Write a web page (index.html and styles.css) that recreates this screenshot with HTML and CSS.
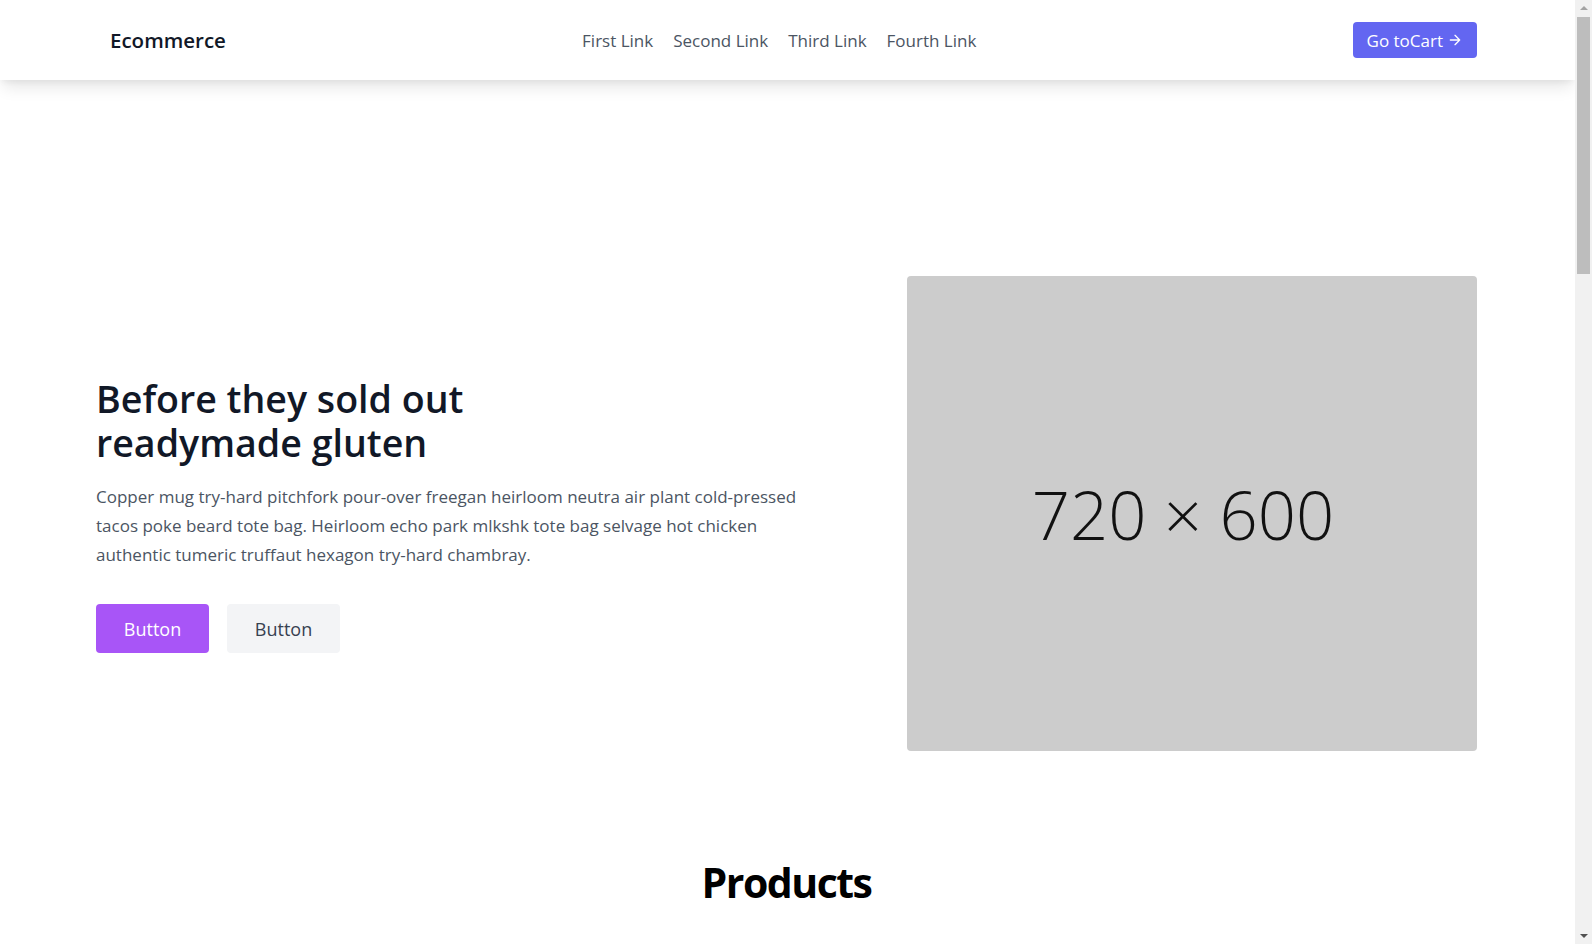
FILE: index.html
```html
<!DOCTYPE html>
<html lang="en">
<head>
<meta charset="utf-8">
<title>Ecommerce</title>
<link rel="stylesheet" href="styles.css">
</head>
<body>
<header class="site-header">
  <div class="header-inner">
    <a class="logo" href="#">Ecommerce</a>
    <nav class="main-nav">
      <a href="#">First Link</a>
      <a href="#">Second Link</a>
      <a href="#">Third Link</a>
      <a href="#">Fourth Link</a>
    </nav>
    <button class="cart-btn" type="button">Go toCart
      <svg class="cart-arrow" viewBox="0 0 24 24" fill="none" stroke="currentColor" stroke-width="2" stroke-linecap="round" stroke-linejoin="round"><path d="M5 12h14M12 5l7 7-7 7"/></svg>
    </button>
  </div>
</header>

<section class="hero">
  <div class="hero-inner">
    <div class="hero-text">
      <h1 class="hero-title">Before they sold out<br>readymade gluten</h1>
      <p class="hero-copy">Copper mug try-hard pitchfork pour-over freegan heirloom neutra air plant cold-pressed tacos poke beard tote bag. Heirloom echo park mlkshk tote bag selvage hot chicken authentic tumeric truffaut hexagon try-hard chambray.</p>
      <div class="hero-actions">
        <button class="btn btn-primary" type="button">Button</button>
        <button class="btn btn-secondary" type="button">Button</button>
      </div>
    </div>
    <div class="hero-image"><span>720 × 600</span></div>
  </div>
</section>

<section class="products">
  <h2 class="products-title">Products</h2>
  <div class="product-grid">
    <div class="product-card"><div class="product-img"><span>420 × 260</span></div><h3>CATEGORY</h3><h2>The Catalyzer</h2><p>$16.00</p></div>
    <div class="product-card"><div class="product-img"><span>420 × 260</span></div><h3>CATEGORY</h3><h2>Shooting Stars</h2><p>$21.15</p></div>
    <div class="product-card"><div class="product-img"><span>420 × 260</span></div><h3>CATEGORY</h3><h2>Neptune</h2><p>$12.00</p></div>
    <div class="product-card"><div class="product-img"><span>420 × 260</span></div><h3>CATEGORY</h3><h2>The 400 Blows</h2><p>$18.40</p></div>
    <div class="product-card"><div class="product-img"><span>420 × 260</span></div><h3>CATEGORY</h3><h2>The Catalyzer</h2><p>$16.00</p></div>
    <div class="product-card"><div class="product-img"><span>420 × 260</span></div><h3>CATEGORY</h3><h2>Shooting Stars</h2><p>$21.15</p></div>
    <div class="product-card"><div class="product-img"><span>420 × 260</span></div><h3>CATEGORY</h3><h2>Neptune</h2><p>$12.00</p></div>
    <div class="product-card"><div class="product-img"><span>420 × 260</span></div><h3>CATEGORY</h3><h2>The 400 Blows</h2><p>$18.40</p></div>
  </div>
</section>

<div class="fake-scrollbar" aria-hidden="true">
  <span class="sb-arrow sb-up"></span>
  <span class="sb-thumb"></span>
  <span class="sb-arrow sb-down"></span>
</div>
</body>
</html>
```

FILE: styles.css
```css
* { box-sizing: border-box; }

html, body {
  margin: 0;
  padding: 0;
}

body {
  padding-right: 17px;
  font-family: "Open Sans", "Noto Sans", "Liberation Sans", sans-serif;
  color: #111827;
  background: #ffffff;
}

a { text-decoration: none; color: inherit; }

button { font-family: inherit; cursor: pointer; }

/* Header */
.site-header {
  position: relative;
  z-index: 2;
  background: #ffffff;
  box-shadow: 0 10px 15px -3px rgba(0, 0, 0, 0.1), 0 4px 6px -2px rgba(0, 0, 0, 0.05);
}

.header-inner {
  height: 80px;
  display: flex;
  align-items: center;
  padding: 0 98px;
}

.logo {
  margin-left: 12px;
  font-size: 20.5px;
  font-weight: 600;
  color: #111827;
}

.main-nav {
  margin: 0 auto;
  display: flex;
  font-size: 17px;
  color: #4b5563;
}

.main-nav a {
  margin-right: 20px;
}

.cart-btn {
  display: inline-flex;
  align-items: center;
  height: 36px;
  padding: 0 14px;
  border: 0;
  border-radius: 4px;
  background: #6366f1;
  color: #ffffff;
  font-size: 17px;
}

.cart-arrow {
  width: 16px;
  height: 16px;
  margin-left: 4px;
}

/* Hero */
.hero-inner {
  display: flex;
  align-items: center;
  padding: 196px 98px 96px 96px;
}

.hero-text {
  flex: 1 1 auto;
  padding-right: 96px;
}

.hero-title {
  margin: 0 0 17px;
  padding-top: 3px;
  font-size: 37.6px;
  line-height: 44px;
  font-weight: 600;
  color: #111827;
}

.hero-copy {
  margin: 0 0 35px;
  font-size: 17px;
  line-height: 29px;
  color: #4b5563;
}

.hero-actions {
  display: flex;
  gap: 18px;
}

.btn {
  height: 49px;
  width: 113px;
  border: 0;
  border-radius: 4px;
  font-size: 18px;
}

.btn-primary {
  background: #a855f7;
  color: #ffffff;
}

.btn-secondary {
  background: #f3f4f6;
  color: #374151;
}

.hero-image {
  flex: 0 0 570px;
  height: 475px;
  border-radius: 4px;
  background: #cccccc;
  display: flex;
  align-items: center;
  justify-content: center;
}

.hero-image span {
  margin-right: 18px;
  font-size: 67px;
  font-weight: 300;
  color: #111111;
}

/* Products */
.products {
  padding: 0 98px 96px 96px;
}

.products-title {
  margin: 11px 0 48px;
  text-align: center;
  font-size: 41px;
  line-height: 48px;
  letter-spacing: -1.5px;
  font-weight: 700;
  color: #000000;
}

.product-grid {
  display: grid;
  grid-template-columns: repeat(4, 1fr);
  gap: 40px 32px;
}

.product-img {
  height: 280px;
  border-radius: 4px;
  background: #cccccc;
  display: flex;
  align-items: center;
  justify-content: center;
}

.product-img span {
  font-size: 36px;
  font-weight: 300;
}

.product-card h3 {
  margin: 16px 0 4px;
  font-size: 12px;
  letter-spacing: 0.1em;
  color: #6b7280;
}

.product-card h2 {
  margin: 0;
  font-size: 18px;
  font-weight: 500;
  color: #111827;
}

.product-card p {
  margin: 4px 0 0;
  font-size: 16px;
}

/* Browser scrollbar as seen in the reference */
.fake-scrollbar {
  position: fixed;
  top: 0;
  right: 0;
  width: 17px;
  height: 100vh;
  background: #f1f1f1;
  z-index: 10;
}

.sb-thumb {
  position: absolute;
  top: 17px;
  left: 2px;
  width: 13px;
  height: 257px;
  background: #bdbdbd;
}

.sb-arrow {
  position: absolute;
  left: 5px;
  width: 0;
  height: 0;
  border-left: 4px solid transparent;
  border-right: 4px solid transparent;
}

.sb-up {
  top: 6px;
  border-bottom: 4px solid #a3a3a3;
}

.sb-down {
  bottom: 6px;
  border-top: 4px solid #505050;
}
```
